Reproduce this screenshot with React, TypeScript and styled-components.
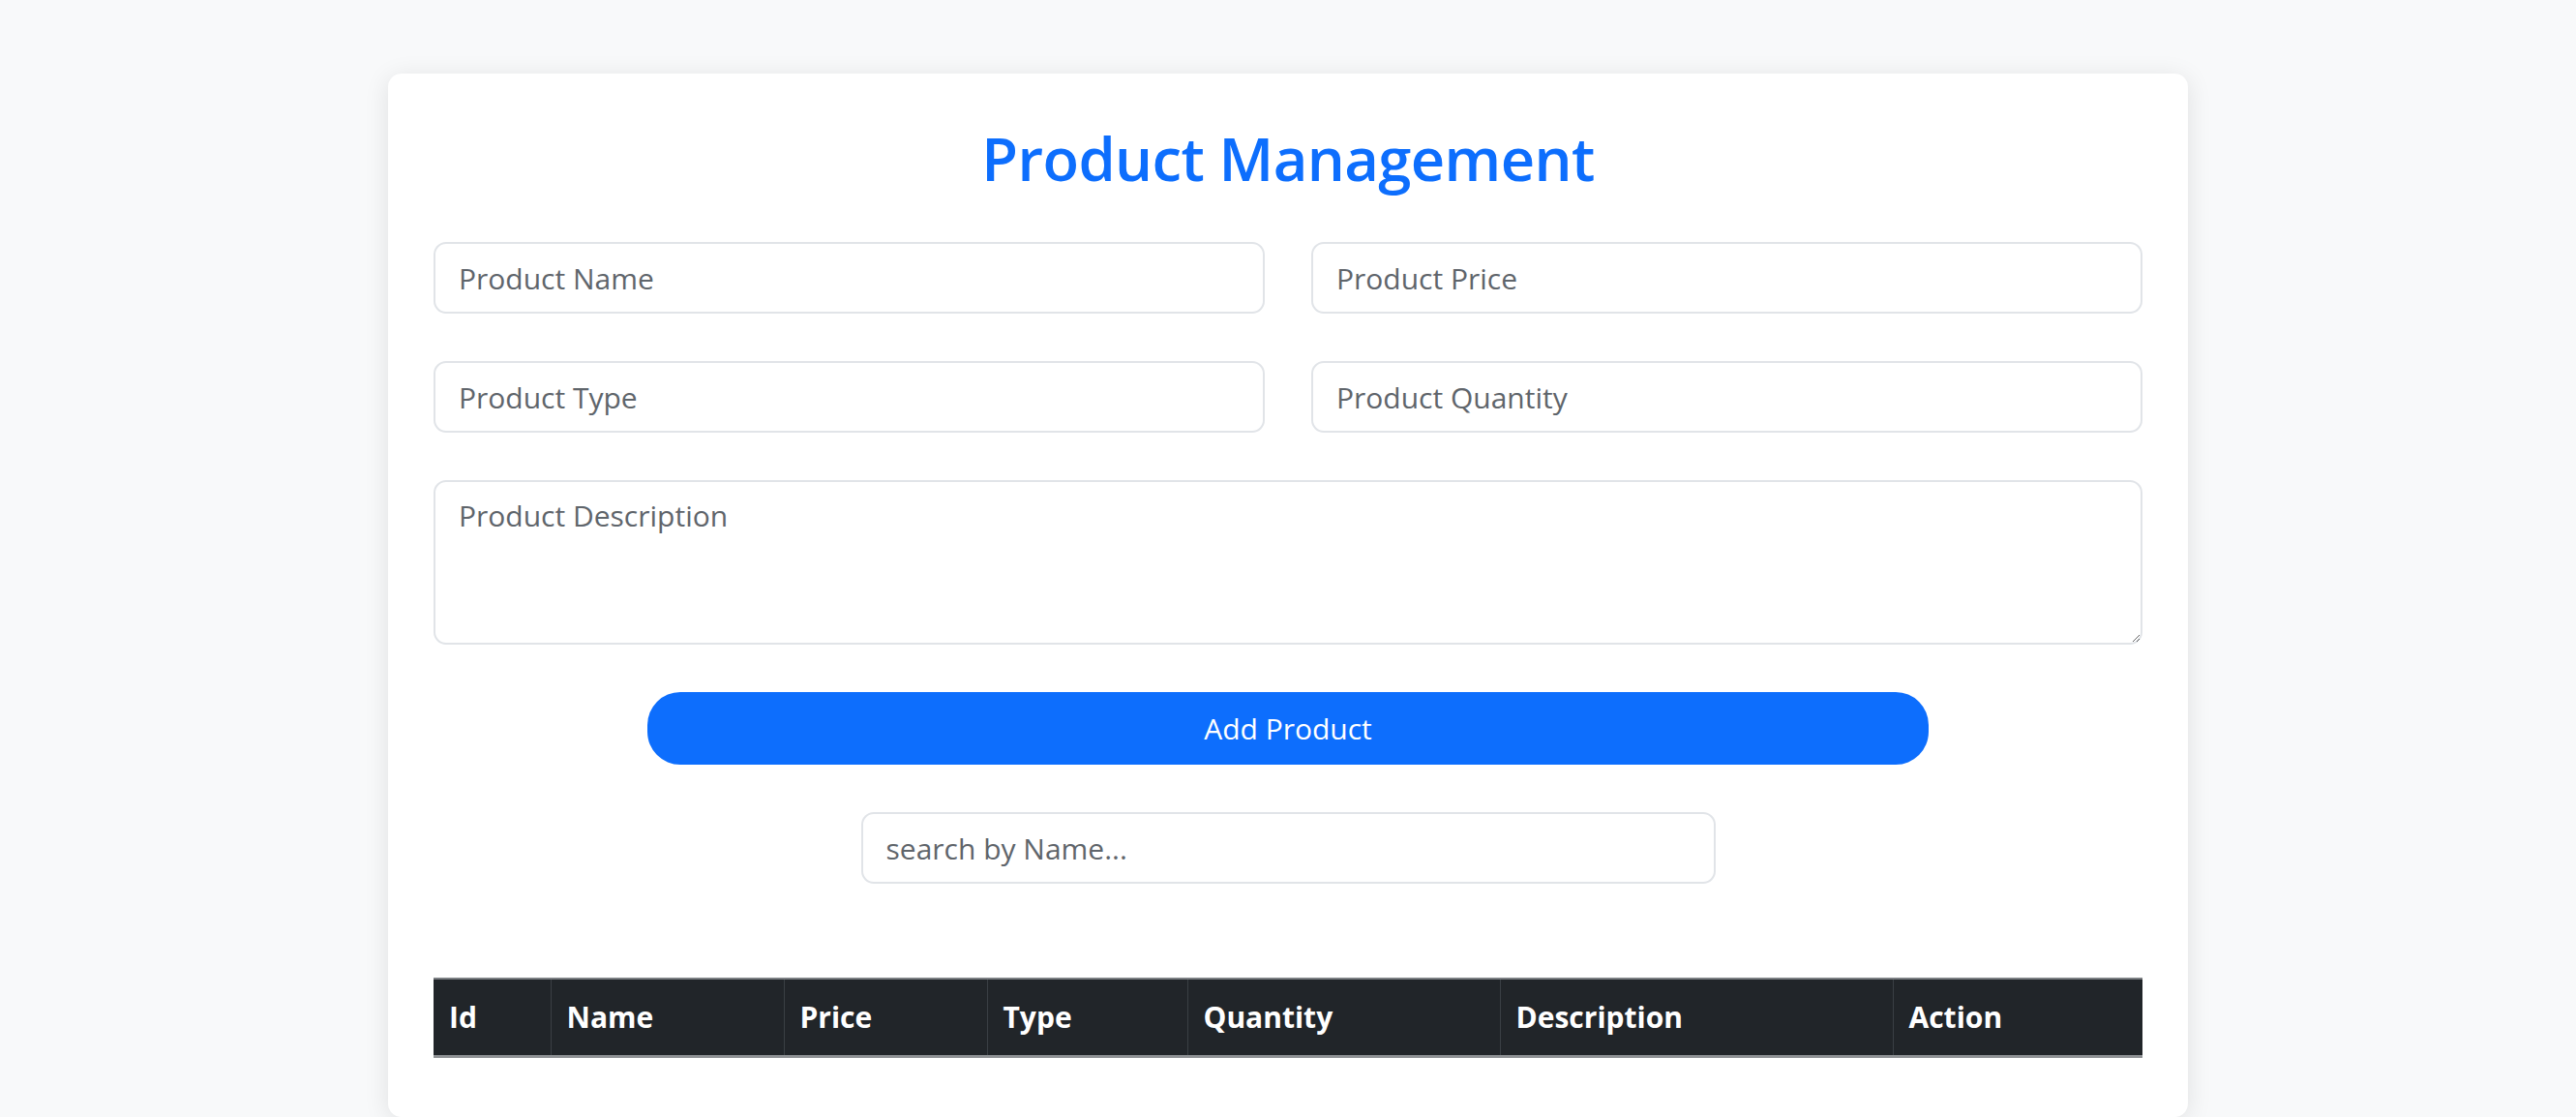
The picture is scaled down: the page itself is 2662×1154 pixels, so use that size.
import React, { useState } from "react";
import styled, { createGlobalStyle } from "styled-components";

const GlobalStyle = createGlobalStyle`
  html, body {
    margin: 0;
    padding: 0;
    background: #f8f9fa;
    font-family: "Open Sans", "Noto Sans", "Liberation Sans", sans-serif;
  }
  * {
    box-sizing: border-box;
  }
`;

const Page = styled.div`
  min-height: 1154px;
  padding-top: 76px;
  display: flex;
  justify-content: center;
`;

const Card = styled.div`
  width: 1860px;
  background: #fff;
  border-radius: 14px;
  box-shadow: 0 4px 26px rgba(0, 0, 0, 0.1);
  padding: 46px 47px 60px;
`;

const Title = styled.h1`
  margin: 0 0 46px;
  text-align: center;
  font-size: 61.5px;
  line-height: 82px;
  letter-spacing: -0.6px;
  font-weight: 600;
  color: #0d6efd;
`;

const Form = styled.div`
  display: flex;
  flex-direction: column;
  gap: 49px;
`;

const FieldGrid = styled.div`
  display: grid;
  grid-template-columns: 1fr 1fr;
  column-gap: 48px;
  row-gap: 49px;
`;

const fieldStyles = `
  width: 100%;
  font-family: inherit;
  font-size: 30px;
  line-height: 1.5;
  color: #212529;
  background: #fff;
  border: 2px solid #e1e4e8;
  border-radius: 13px;
  padding: 12px 24px;
  outline: none;

  &::placeholder {
    color: #5f656b;
  }
`;

const Input = styled.input`
  ${fieldStyles}
  height: 74px;
`;

const TextArea = styled.textarea`
  ${fieldStyles}
  height: 170px;
  display: block;
  resize: vertical;
`;

const AddButton = styled.button`
  align-self: center;
  width: 75%;
  height: 75px;
  border: none;
  border-radius: 34px;
  background: #0d6efd;
  color: #fff;
  font-family: inherit;
  font-size: 30px;
  cursor: pointer;
`;

const SearchInput = styled(Input)`
  align-self: center;
  width: 50%;
`;

const Table = styled.table`
  width: 100%;
  margin-top: 97px;
  border-collapse: collapse;
  table-layout: fixed;
`;

const HeadRow = styled.tr`
  background: #212529;
  border-top: 2px solid #7c7f83;
  border-bottom: 3px solid #8e9194;
`;

const HeadCell = styled.th<{ $width: number }>`
  width: ${({ $width }) => $width}px;
  height: 80px;
  padding: 0 16px;
  text-align: left;
  color: #fff;
  font-size: 30px;
  font-weight: 700;
  border-left: 1px solid #3a3f44;

  &:first-child {
    border-left: none;
  }
`;

const columns: [string, number][] = [
  ["Id", 121],
  ["Name", 241],
  ["Price", 210],
  ["Type", 207],
  ["Quantity", 323],
  ["Description", 406],
  ["Action", 258],
];

export default function App() {
  const [form, setForm] = useState({
    name: "",
    price: "",
    type: "",
    quantity: "",
    description: "",
  });
  const [search, setSearch] = useState("");

  const update =
    (key: keyof typeof form) =>
    (e: React.ChangeEvent<HTMLInputElement | HTMLTextAreaElement>) =>
      setForm((prev) => ({ ...prev, [key]: e.target.value }));

  return (
    <>
      <GlobalStyle />
      <Page>
        <Card>
          <Title>Product Management</Title>
          <Form>
            <FieldGrid>
              <Input placeholder="Product Name" value={form.name} onChange={update("name")} />
              <Input placeholder="Product Price" value={form.price} onChange={update("price")} />
              <Input placeholder="Product Type" value={form.type} onChange={update("type")} />
              <Input
                placeholder="Product Quantity"
                value={form.quantity}
                onChange={update("quantity")}
              />
            </FieldGrid>
            <TextArea
              placeholder="Product Description"
              value={form.description}
              onChange={update("description")}
            />
            <AddButton>Add Product</AddButton>
            <SearchInput
              placeholder="search by Name..."
              value={search}
              onChange={(e) => setSearch(e.target.value)}
            />
          </Form>
          <Table>
            <thead>
              <HeadRow>
                {columns.map(([label, width]) => (
                  <HeadCell key={label} $width={width}>
                    {label}
                  </HeadCell>
                ))}
              </HeadRow>
            </thead>
            <tbody></tbody>
          </Table>
        </Card>
      </Page>
    </>
  );
}
